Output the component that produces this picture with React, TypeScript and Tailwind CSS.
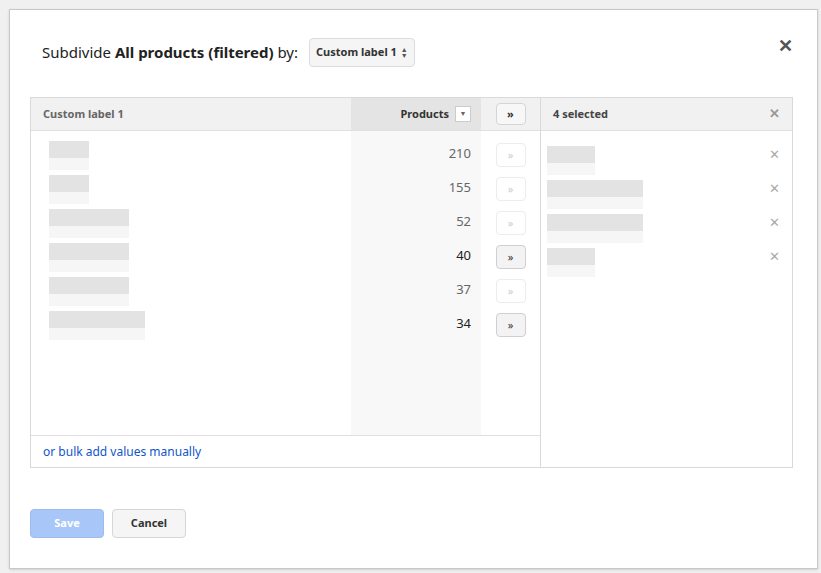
import React from "react";

const rows = [
  { n: 210, on: false, w: [40, 16] },
  { n: 155, on: false, w: [40, 16] },
  { n: 52, on: false, w: [80, 16] },
  { n: 40, on: true, w: [80, 28] },
  { n: 37, on: false, w: [80, 16] },
  { n: 34, on: true, w: [96, 16] },
];
const sel = [48, 96, 96, 48];

function Blur({ w }: { w: number }) {
  return (
    <div className="flex flex-col">
      <div className="h-[17px] bg-[#e3e3e3]" style={{ width: w }} />
      <div className="h-[12px] bg-[#f6f6f6]" style={{ width: w }} />
    </div>
  );
}

export default function App() {
  return (
    <div className="w-[821px] h-[573px] bg-[#f0f0f0] pt-[9px] pl-[9px] font-['Liberation_Sans']">
      <div className="w-[809px] h-[560px] bg-white border border-[#c8c8c8] shadow relative px-[20px]">
        <button className="absolute right-[24px] top-[26px] text-[#555] text-[18px] font-bold leading-none">✕</button>
        <div className="flex items-center h-[29px] mt-[28px] ml-[12px]">
          <span className="text-[15px] text-[#222]">
            Subdivide <b>All products (filtered)</b> by:
          </span>
          <div className="ml-[11px] h-[29px] px-[6px] flex items-center gap-[4px] bg-[#f5f5f5] border border-[#dcdcdc] rounded-sm text-[11px] font-bold text-[#333] whitespace-nowrap">
            <span>Custom label 1</span>
            <span className="text-[7px] leading-[6px] flex flex-col text-[#555]"><span>▲</span><span>▼</span></span>
          </div>
        </div>
        <div className="mt-[30px] w-[763px] h-[371px] border border-[#d9d9d9] flex text-[11px]">
          <div className="w-[510px] flex flex-col border-r border-[#d9d9d9]">
            <div className="h-[33px] flex bg-[#f1f1f1] border-b border-[#e0e0e0] font-bold text-[#666]">
              <div className="w-[320px] pl-[12px] flex items-center">Custom label 1</div>
              <div className="w-[130px] bg-[#e4e4e4] flex items-center justify-end pr-[10px] gap-[6px] text-[#333]">
                Products
                <span className="w-[16px] h-[16px] bg-white border border-[#ccc] flex items-center justify-center text-[7px] text-[#666]">▼</span>
              </div>
              <div className="flex-1 flex items-center justify-center">
                <span className="w-[30px] h-[22px] bg-[#f7f7f7] border border-[#d5d5d5] rounded-sm flex items-center justify-center text-[#333]">»</span>
              </div>
            </div>
            <div className="flex-1 flex">
              <div className="w-[320px] pl-[12px] pt-[10px] flex flex-col gap-[5px]">
                {rows.map((r, i) => (
                  <div key={i} className="h-[29px] flex items-start pl-[6px]"><Blur w={r.w[0]} /></div>
                ))}
              </div>
              <div className="w-[130px] bg-[#f8f8f8] pt-[13px] pr-[10px] flex flex-col gap-[5px] items-end">
                {rows.map((r, i) => (
                  <div key={i} className={`h-[29px] text-[13px] ${r.on ? "text-[#222]" : "text-[#666]"}`}>{r.n}</div>
                ))}
              </div>
              <div className="flex-1 pt-[12px] flex flex-col gap-[10px] items-center">
                {rows.map((r, i) => (
                  <span key={i} className={`w-[30px] h-[24px] rounded-sm flex items-center justify-center border ${r.on ? "bg-[#f3f3f3] border-[#cfcfcf] text-[#333]" : "bg-white border-[#ececec] text-[#ccc]"}`}>»</span>
                ))}
              </div>
            </div>
            <div className="h-[32px] border-t border-[#e0e0e0] pl-[12px] flex items-center text-[12px] text-[#1155cc]">or bulk add values manually</div>
          </div>
          <div className="flex-1 flex flex-col">
            <div className="h-[33px] bg-[#f1f1f1] border-b border-[#e0e0e0] flex items-center justify-between px-[12px] font-bold text-[#444]">
              4 selected<span className="text-[#999] text-[13px]">✕</span>
            </div>
            <div className="pt-[15px] pl-[6px] pr-[12px] flex flex-col gap-[5px]">
              {sel.map((w, i) => (
                <div key={i} className="h-[29px] flex justify-between items-start">
                  <Blur w={w} />
                  <span className="text-[#aaa] text-[13px] leading-none mt-[2px]">✕</span>
                </div>
              ))}
            </div>
          </div>
        </div>
        <div className="mt-[41px] flex gap-[8px] text-[11px] font-bold">
          <button className="w-[74px] h-[29px] rounded-sm bg-[#a8c6f7] text-white border border-[#9bbcf0]">Save</button>
          <button className="w-[74px] h-[29px] rounded-sm bg-[#f5f5f5] text-[#333] border border-[#d6d6d6]">Cancel</button>
        </div>
      </div>
    </div>
  );
}
